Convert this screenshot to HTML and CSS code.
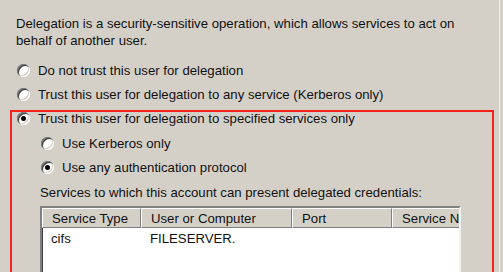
FILE: index.html
```html
<!DOCTYPE html>
<html lang="en">
<head>
    <meta charset="UTF-8">
    <title>Delegation</title>
    <link rel="stylesheet" href="styles.css">
</head>
<body>
    <div class="tab-page">
        <p class="intro">Delegation is a security-sensitive operation, which allows services to act on<br>behalf of another user.</p>
        <div class="opt-list">
            <div class="radio-row"><span class="radio"></span>Do not trust this user for delegation</div>
            <div class="radio-row"><span class="radio"></span>Trust this user for delegation to any service (Kerberos only)</div>
            <div class="radio-row"><span class="radio checked"></span>Trust this user for delegation to specified services only</div>
        </div>
        <div class="sub-opts">
            <div class="radio-row"><span class="radio"></span>Use Kerberos only</div>
            <div class="radio-row"><span class="radio checked"></span>Use any authentication protocol</div>
            <p class="list-label">Services to which this account can present delegated credentials:</p>
            <div class="listview">
                <div class="lv-head">
                    <div class="lv-col col-type">Service Type</div>
                    <div class="lv-col col-user">User or Computer</div>
                    <div class="lv-col col-port">Port</div>
                    <div class="lv-col col-name">Service Name</div>
                </div>
                <div class="lv-row">
                    <div class="lv-cell col-type">cifs</div>
                    <div class="lv-cell col-user">FILESERVER.</div>
                    <div class="lv-cell col-port"></div>
                    <div class="lv-cell col-name"></div>
                </div>
            </div>
        </div>
        <div class="highlight"></div>
    </div>
</body>
</html>
```

FILE: styles.css
```css
body {
    margin: 0;
    background: #d4d0c8;
    font-family: 'Liberation Sans', Arial, sans-serif;
    font-size: 13.2px;
    color: #111;
    overflow: hidden;
}
.tab-page {
    position: relative;
    width: 500px;
    height: 272px;
    padding: 15px 0 0 16px;
    border-right: 1px solid #f4f2ee;
    box-sizing: border-box;
    overflow: hidden;
}
.intro {
    margin: 0;
    line-height: 17px;
}
.opt-list {
    margin-top: 9px;
}
.radio-row {
    display: flex;
    align-items: center;
    height: 24px;
    gap: 8px;
    white-space: nowrap;
}
.radio {
    position: relative;
    width: 13px;
    height: 13px;
    margin-left: 1px;
    border-radius: 50%;
    background: #fff;
    box-shadow: inset 1px 1px 0 #808080, inset 2px 2px 0 #404040, inset -1px -1px 0 #fff, inset -2px -2px 0 #d4d0c8;
    flex: none;
}
.radio.checked::after {
    content: "";
    position: absolute;
    left: 4px;
    top: 4px;
    width: 5px;
    height: 5px;
    border-radius: 50%;
    background: #000;
}
.sub-opts {
    margin-left: 24px;
    margin-top: 1px;
}
.list-label {
    margin: 5px 0 0 0;
    line-height: 17px;
}
.listview {
    margin-top: 5px;
    width: 417px;
    height: 80px;
    background: #fff;
    border: 2px solid;
    border-color: #808080 #f4f2ee #f4f2ee #808080;
    box-shadow: inset 1px 1px 0 #404040;
    overflow: hidden;
}
.lv-head {
    display: flex;
    background: #d4d0c8;
}
.lv-col {
    height: 20px;
    line-height: 19px;
    padding-left: 9px;
    box-sizing: border-box;
    border-top: 1px solid #fff;
    border-left: 1px solid #fff;
    border-right: 1px solid #808080;
    border-bottom: 1px solid #808080;
    white-space: nowrap;
    overflow: hidden;
    flex: none;
}
.lv-row {
    display: flex;
    height: 22px;
    line-height: 22px;
}
.lv-cell {
    padding-left: 9px;
    box-sizing: border-box;
    white-space: nowrap;
    flex: none;
}
.col-type { width: 99px; }
.col-user { width: 151px; }
.col-port { width: 100px; }
.col-name { width: 100px; }
.highlight {
    position: absolute;
    left: 10px;
    top: 110px;
    width: 480px;
    height: 180px;
    border: 2px solid #f5231c;
}
```
